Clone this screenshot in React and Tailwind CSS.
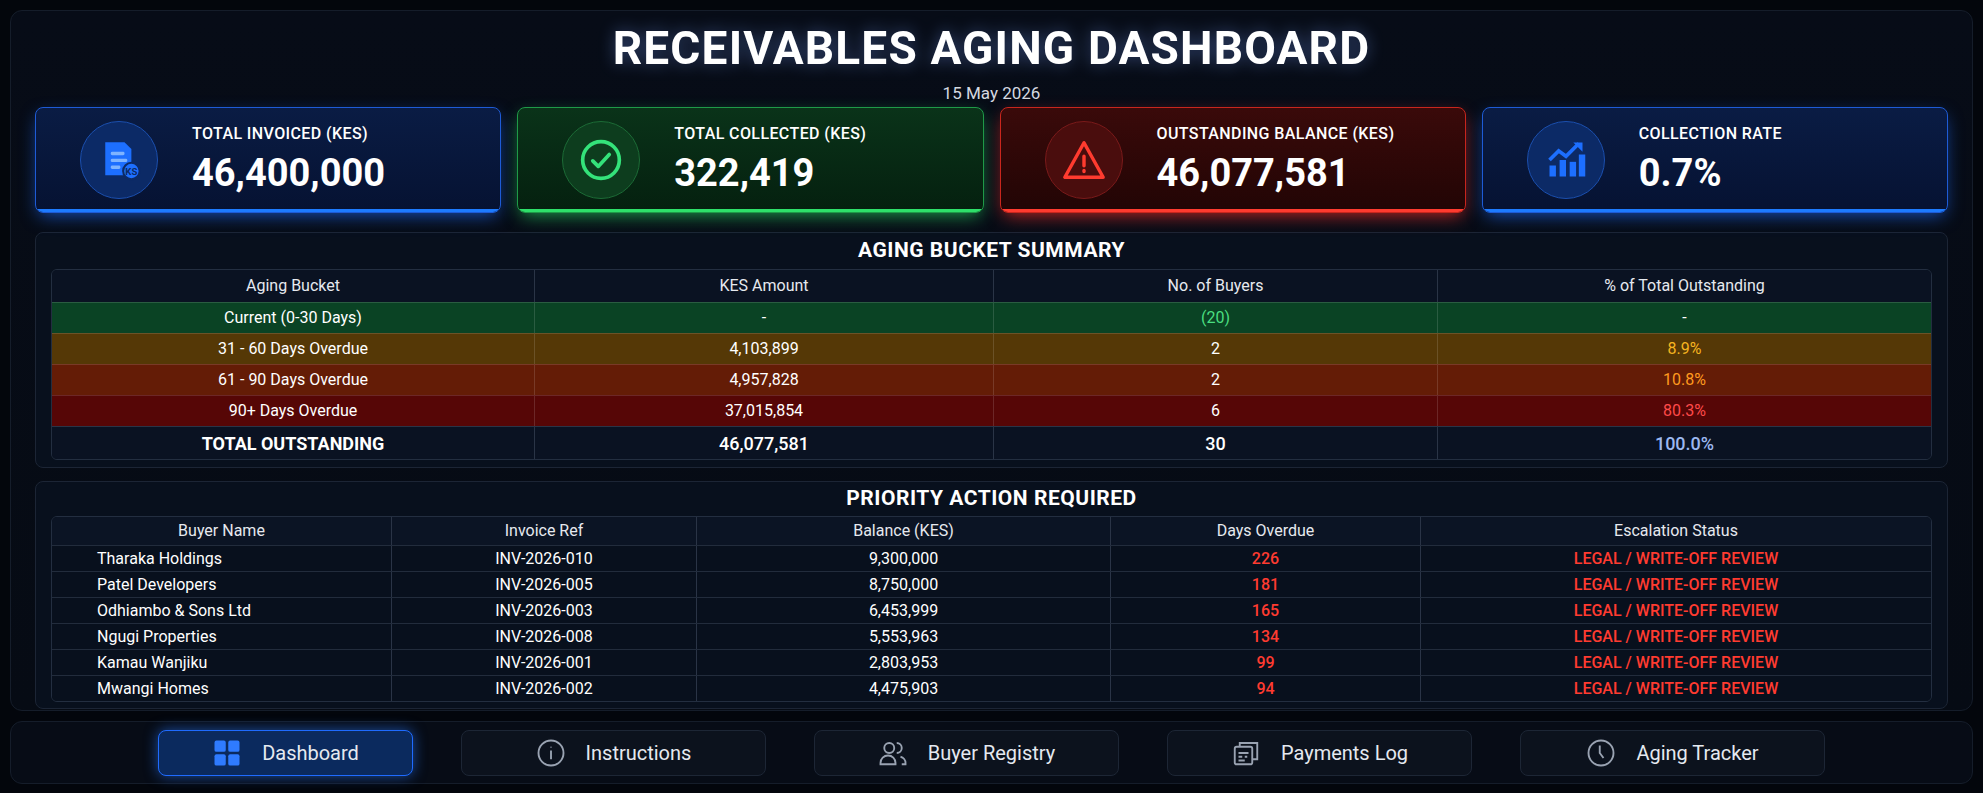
import React from "react";

const F = { fontFamily: "Roboto, 'Noto Sans', sans-serif" };

function Card({ tone, icon, label, value }) {
  const t = {
    blue: "border-[#1e5bd6] bg-gradient-to-b from-[#0a1c44] to-[#061232] shadow-[0_6px_18px_-4px_rgba(30,110,255,0.7)]",
    green: "border-[#1f9a48] bg-gradient-to-b from-[#0a3319] to-[#05200f] shadow-[0_6px_18px_-4px_rgba(40,220,100,0.7)]",
    red: "border-[#c9261d] bg-gradient-to-b from-[#3a0a0a] to-[#220505] shadow-[0_6px_18px_-4px_rgba(255,50,40,0.75)]",
  }[tone];
  const bar = { blue: "bg-[#1d7bff]", green: "bg-[#2ee06a]", red: "bg-[#ff3b2f]" }[tone];
  const circ = {
    blue: "bg-[#0c2a66] border-[#1b4fae]",
    green: "bg-[#0d3d1e] border-[#1c6b36]",
    red: "bg-[#4a0d0d] border-[#7a1a1a]",
  }[tone];
  return (
    <div className={`relative flex-1 h-[106px] rounded-lg border ${t} flex items-center pl-[44px] overflow-hidden`}>
      <div className={`w-[78px] h-[78px] rounded-full border ${circ} flex items-center justify-center shrink-0`}>{icon}</div>
      <div className="ml-[34px] flex flex-col">
        <div className="text-white text-[16px] font-medium tracking-wide">{label}</div>
        <div className="text-white text-[38px] font-bold leading-tight mt-1">{value}</div>
      </div>
      <div className={`absolute left-0 right-0 bottom-0 h-[3px] ${bar}`} />
    </div>
  );
}

const bucketRows = [
  { b: "Current (0-30 Days)", a: "-", n: "(20)", p: "-", bg: "bg-[#0a4324]", nc: "text-[#4ade80]", pc: "text-white" },
  { b: "31 - 60 Days Overdue", a: "4,103,899", n: "2", p: "8.9%", bg: "bg-[#553806]", nc: "text-white", pc: "text-[#f6b420]" },
  { b: "61 - 90 Days Overdue", a: "4,957,828", n: "2", p: "10.8%", bg: "bg-[#641c06]", nc: "text-white", pc: "text-[#ff9a1f]" },
  { b: "90+ Days Overdue", a: "37,015,854", n: "6", p: "80.3%", bg: "bg-[#560606]", nc: "text-white", pc: "text-[#ff4a4a]" },
];

const prio = [
  ["Tharaka Holdings", "INV-2026-010", "9,300,000", "226"],
  ["Patel Developers", "INV-2026-005", "8,750,000", "181"],
  ["Odhiambo & Sons Ltd", "INV-2026-003", "6,453,999", "165"],
  ["Ngugi Properties", "INV-2026-008", "5,553,963", "134"],
  ["Kamau Wanjiku", "INV-2026-001", "2,803,953", "99"],
  ["Mwangi Homes", "INV-2026-002", "4,475,903", "94"],
];

const ic = "w-[30px] h-[30px]";
const Ico = {
  dash: (
    <svg className={ic} viewBox="0 0 24 24" fill="#2f7bff"><rect x="2" y="2" width="9" height="9" rx="1.5"/><rect x="13" y="2" width="9" height="9" rx="1.5"/><rect x="2" y="13" width="9" height="9" rx="1.5"/><rect x="13" y="13" width="9" height="9" rx="1.5"/></svg>
  ),
  info: (
    <svg className={ic} viewBox="0 0 24 24" fill="none" stroke="#9aa3b2" strokeWidth="1.5"><circle cx="12" cy="12" r="10"/><path d="M12 10v7M12 7v.5"/></svg>
  ),
  users: (
    <svg className={ic} viewBox="0 0 24 24" fill="none" stroke="#9aa3b2" strokeWidth="1.5"><circle cx="9" cy="8" r="4"/><path d="M2 21v-1a6 6 0 0 1 12 0v1z"/><path d="M15 4a4 4 0 0 1 0 8M18 15a5 5 0 0 1 4 5v1h-3"/></svg>
  ),
  pay: (
    <svg className={ic} viewBox="0 0 24 24" fill="none" stroke="#9aa3b2" strokeWidth="1.5"><rect x="3" y="7" width="14" height="14" rx="1.5"/><path d="M7 7V4h14v13h-4M6 12h8M6 15h3M11 15h2M6 18h5"/></svg>
  ),
  clock: (
    <svg className={ic} viewBox="0 0 24 24" fill="none" stroke="#9aa3b2" strokeWidth="1.5"><circle cx="12" cy="12" r="10"/><path d="M11 6v6l3 4"/></svg>
  ),
};

function NavBtn({ icon, label, active, w }) {
  return (
    <div className={`${w} h-[46px] rounded-lg flex items-center justify-center gap-5 border ${active ? "border-[#1f6bff] bg-[#0b2a5e] shadow-[0_0_14px_rgba(40,120,255,0.6)]" : "border-[#1d2635] bg-[#0c121d]"}`}>
      {icon}
      <span className="text-[#e5e9f0] text-[20px]">{label}</span>
    </div>
  );
}

export default function App() {
  return (
    <div style={F} className="w-[1983px] h-[793px] bg-[#03060c] px-[10px] pt-[10px] pb-[9px] flex flex-col gap-[10px] overflow-hidden">
      <div className="h-[701px] shrink-0 rounded-xl border border-[#151d2a] bg-gradient-to-b from-[#070c17] to-[#060b14] px-[24px] flex flex-col">
        <div className="flex flex-col items-center pt-[14px] h-[96px]">
          <div className="text-white text-[46px] font-bold tracking-wide leading-none drop-shadow-[0_0_8px_rgba(120,160,255,0.4)]">RECEIVABLES AGING DASHBOARD</div>
          <div className="text-[#d5d9e0] text-[17px] mt-[10px]">15 May 2026</div>
        </div>
        <div className="flex gap-[16px]">
          <Card tone="blue" label="TOTAL INVOICED (KES)" value="46,400,000" icon={
            <svg className="w-[44px] h-[44px]" viewBox="0 0 32 32"><path d="M6 3h14l5 5v19H6z" fill="#1d6fff"/><rect x="10" y="10" width="10" height="2.5" rx="1" fill="#7fb4ff"/><rect x="10" y="15" width="12" height="2.5" rx="1" fill="#7fb4ff"/><rect x="10" y="20" width="7" height="2.5" rx="1" fill="#7fb4ff"/><circle cx="25" cy="24" r="6" fill="#1d6fff" stroke="#0c2a66" strokeWidth="1.5"/><text x="25" y="27" fontSize="7" textAnchor="middle" fill="#0c2a66" fontWeight="bold">KS</text></svg>
          } />
          <Card tone="green" label="TOTAL COLLECTED (KES)" value="322,419" icon={
            <svg className="w-[44px] h-[44px]" viewBox="0 0 24 24" fill="none" stroke="#34e27a" strokeWidth="2"><circle cx="12" cy="12" r="10"/><path d="M7.5 12.5l3 3 6-6.5" strokeLinecap="round" strokeLinejoin="round"/></svg>
          } />
          <Card tone="red" label="OUTSTANDING BALANCE (KES)" value="46,077,581" icon={
            <svg className="w-[46px] h-[46px]" viewBox="0 0 24 24" fill="none" stroke="#ff3b2f" strokeWidth="1.8" strokeLinejoin="round"><path d="M12 3L2 21h20z"/><path d="M12 10v5M12 17.5v.5" strokeLinecap="round"/></svg>
          } />
          <Card tone="blue" label="COLLECTION RATE" value="0.7%" icon={
            <svg className="w-[44px] h-[44px]" viewBox="0 0 24 24" fill="#1d6fff"><rect x="3" y="15" width="3.5" height="6"/><rect x="8.5" y="12" width="3.5" height="9"/><rect x="14" y="13" width="3.5" height="8"/><rect x="19" y="9" width="3.5" height="12"/><path d="M3 12l5-5 4 3 7-7" fill="none" stroke="#1d6fff" strokeWidth="2"/><path d="M16 2.5h5v5z"/></svg>
          } />
        </div>

        <div className="mt-[19px] h-[236px] rounded-lg border border-[#1c2535] bg-[#08101d] px-[15px] flex flex-col">
          <div className="text-white text-[21px] font-bold text-center tracking-wide h-[36px] flex items-center justify-center">AGING BUCKET SUMMARY</div>
          <div className="rounded-md border border-[#232e40] overflow-hidden text-[16px] text-white">
            <div className="grid grid-cols-[483px_459px_444px_1fr] h-[32px] items-center bg-[#0a1222] text-[#e6e9ef]">
              <div className="text-center border-r border-[#2a3446] h-full flex items-center justify-center">Aging Bucket</div>
              <div className="text-center border-r border-[#2a3446] h-full flex items-center justify-center">KES Amount</div>
              <div className="text-center border-r border-[#2a3446] h-full flex items-center justify-center">No. of Buyers</div>
              <div className="text-center">% of Total Outstanding</div>
            </div>
            {bucketRows.map((r) => (
              <div key={r.b} className={`grid grid-cols-[483px_459px_444px_1fr] h-[31px] items-center border-t border-[#ffffff22] ${r.bg}`}>
                <div className="text-center border-r border-[#ffffff22] h-full flex items-center justify-center">{r.b}</div>
                <div className="text-center border-r border-[#ffffff22] h-full flex items-center justify-center">{r.a}</div>
                <div className={`text-center border-r border-[#ffffff22] h-full flex items-center justify-center ${r.nc}`}>{r.n}</div>
                <div className={`text-center ${r.pc}`}>{r.p}</div>
              </div>
            ))}
            <div className="grid grid-cols-[483px_459px_444px_1fr] h-[33px] items-center border-t border-[#2a3446] bg-[#0a1222] font-medium text-[18px]">
              <div className="text-center border-r border-[#2a3446] h-full flex items-center justify-center font-bold">TOTAL OUTSTANDING</div>
              <div className="text-center border-r border-[#2a3446] h-full flex items-center justify-center">46,077,581</div>
              <div className="text-center border-r border-[#2a3446] h-full flex items-center justify-center">30</div>
              <div className="text-center text-[#9cb8f0]">100.0%</div>
            </div>
          </div>
        </div>

        <div className="mt-[13px] h-[228px] rounded-lg border border-[#1c2535] bg-[#08101d] px-[15px] flex flex-col">
          <div className="text-white text-[21px] font-bold text-center tracking-wide h-[34px] flex items-center justify-center">PRIORITY ACTION REQUIRED</div>
          <div className="rounded-md border border-[#232e40] overflow-hidden text-[16px] text-white">
            <div className="grid grid-cols-[340px_305px_414px_310px_1fr] h-[28px] items-center bg-[#0b1424] text-[#e6e9ef]">
              {["Buyer Name", "Invoice Ref", "Balance (KES)", "Days Overdue", "Escalation Status"].map((h, i) => (
                <div key={h} className={`text-center h-full flex items-center justify-center ${i < 4 ? "border-r border-[#2a3446]" : ""}`}>{h}</div>
              ))}
            </div>
            {prio.map((r) => (
              <div key={r[0]} className="grid grid-cols-[340px_305px_414px_310px_1fr] h-[26px] items-center border-t border-[#222c3c] bg-[#08101d]">
                <div className="pl-[45px] border-r border-[#2a3446] h-full flex items-center">{r[0]}</div>
                <div className="text-center border-r border-[#2a3446] h-full flex items-center justify-center">{r[1]}</div>
                <div className="text-center border-r border-[#2a3446] h-full flex items-center justify-center">{r[2]}</div>
                <div className="text-center border-r border-[#2a3446] h-full flex items-center justify-center text-[#ff3b30] font-medium">{r[3]}</div>
                <div className="text-center text-[#ff3b30] font-medium">LEGAL / WRITE-OFF REVIEW</div>
              </div>
            ))}
          </div>
        </div>
      </div>

      <div className="flex-1 rounded-xl border border-[#151d2a] bg-[#070c16] flex items-center justify-center gap-[48px]">
        <NavBtn w="w-[255px]" active icon={Ico.dash} label="Dashboard" />
        <NavBtn w="w-[305px]" icon={Ico.info} label="Instructions" />
        <NavBtn w="w-[305px]" icon={Ico.users} label="Buyer Registry" />
        <NavBtn w="w-[305px]" icon={Ico.pay} label="Payments Log" />
        <NavBtn w="w-[305px]" icon={Ico.clock} label="Aging Tracker" />
      </div>
    </div>
  );
}
